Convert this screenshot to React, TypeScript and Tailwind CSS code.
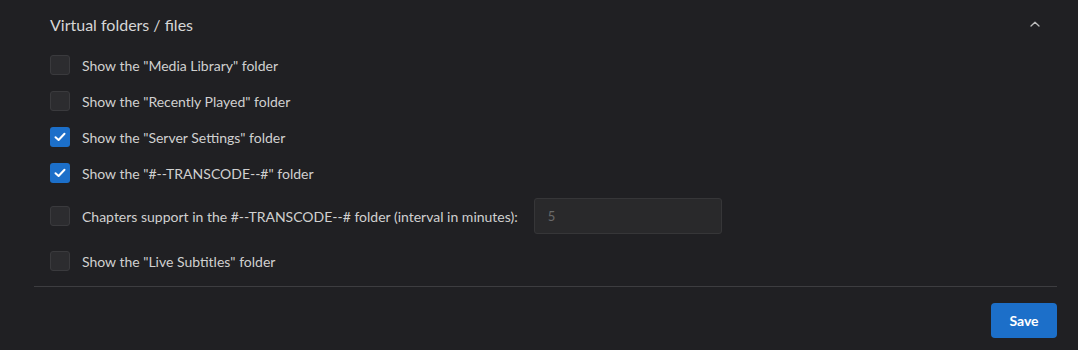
import { useState } from "react";

type Opt = { id: string; label: string; checked: boolean };

const initial: Opt[] = [
  { id: "media", label: 'Show the "Media Library" folder', checked: false },
  { id: "recent", label: 'Show the "Recently Played" folder', checked: false },
  { id: "server", label: 'Show the "Server Settings" folder', checked: true },
  { id: "transcode", label: 'Show the "#--TRANSCODE--#" folder', checked: true },
];

const Check = ({ on, onClick }: { on: boolean; onClick: () => void }) => (
  <button
    onClick={onClick}
    className={
      on
        ? "w-5 h-5 rounded-[3px] bg-[#1c6fc9] flex items-center justify-center shrink-0"
        : "w-5 h-5 rounded-[3px] bg-[#2c2c2f] border border-[#3a3a3d] shrink-0"
    }
  >
    {on && (
      <svg width="12" height="10" viewBox="0 0 12 10" fill="none">
        <path d="M1.5 5.2 4.6 8 10.5 1.8" stroke="white" strokeWidth="2" strokeLinecap="round" strokeLinejoin="round" />
      </svg>
    )}
  </button>
);

const App = () => {
  const [opts, setOpts] = useState(initial);
  const [chapters, setChapters] = useState(false);
  const [live, setLive] = useState(false);

  const toggle = (id: string) =>
    setOpts(opts.map((o) => (o.id === id ? { ...o, checked: !o.checked } : o)));

  return (
    <div
      className="w-full h-[350px] bg-[#202023] text-[#d0d0d0] pl-[34px] pr-[21px]"
      style={{ fontFamily: "Lato, 'Noto Sans', sans-serif" }}
    >
      {/* Header */}
      <div className="h-[47px] flex items-center justify-between pl-4 pt-[3px]">
        <h2 className="text-[16px] text-[#d6d6d6]">Virtual folders / files</h2>
        <svg width="10" height="6" viewBox="0 0 10 6" className="mr-[17px] mb-[2px]" fill="none">
          <path d="M1 5 5 1.2 9 5" stroke="#bdbdbd" strokeWidth="1.3" strokeLinecap="round" strokeLinejoin="round" />
        </svg>
      </div>

      {/* Options */}
      <div className="pl-4 flex flex-col">
        {opts.map((o) => (
          <label key={o.id} className="h-9 flex items-center gap-3 text-[14px]">
            <Check on={o.checked} onClick={() => toggle(o.id)} />
            {o.label}
          </label>
        ))}
        <div className="mt-[7px] h-9 flex items-center gap-3 text-[14px]">
          <Check on={chapters} onClick={() => setChapters(!chapters)} />
          <span>Chapters support in the #--TRANSCODE--# folder (interval in minutes):</span>
          <input
            defaultValue="5"
            disabled={!chapters}
            className="ml-[4px] w-[188px] h-9 rounded-[3px] bg-[#29292b] border border-[#363638] px-[13px] text-[13px] text-[#6a6a6a] outline-none"
          />
        </div>
        <label className="mt-[9px] h-9 flex items-center gap-3 text-[14px]">
          <Check on={live} onClick={() => setLive(!live)} />
          Show the "Live Subtitles" folder
        </label>
      </div>

      {/* Footer */}
      <div className="mt-[7px] border-t border-[#3d3d40] pt-[16px] flex justify-end">
        <button className="w-[66px] h-[35px] rounded-[4px] bg-[#1c6fc9] text-white text-[14px] font-bold">
          Save
        </button>
      </div>
    </div>
  );
};

export default App;
